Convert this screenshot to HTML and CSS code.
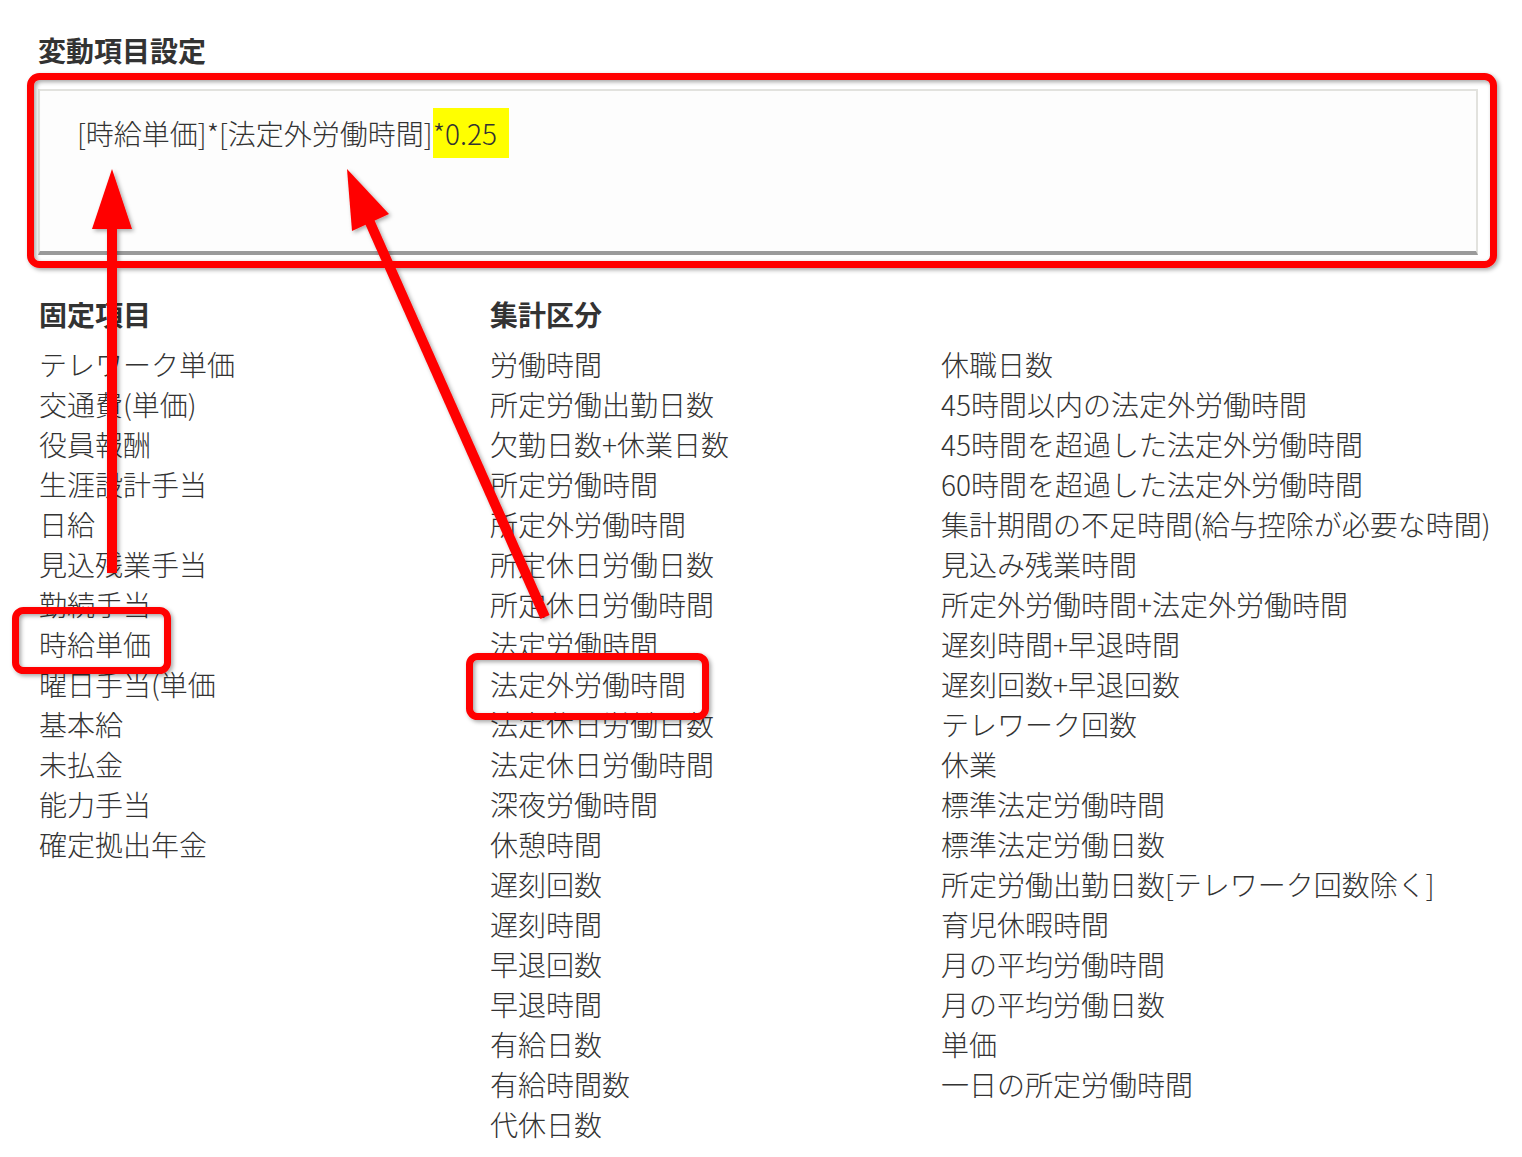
FILE: index.html
```html
<!DOCTYPE html>
<html lang="ja">
<head>
    <meta charset="UTF-8">
    <title>変動項目設定</title>
    <link rel="stylesheet" href="styles.css">
</head>
<body>
    <main class="page">
        <h2 class="section-title">変動項目設定</h2>
        <div class="formula">[時給単価]*[法定外労働時間]<span class="hl">*0.25</span></div>

        <div class="item-groups">
            <section class="group group-fixed">
                <h3 class="group-title">固定項目</h3>
                <ul class="item-list">
                    <li>テレワーク単価</li>
                    <li>交通費(単価)</li>
                    <li>役員報酬</li>
                    <li>生涯設計手当</li>
                    <li>日給</li>
                    <li>見込残業手当</li>
                    <li>勤続手当</li>
                    <li>時給単価</li>
                    <li>曜日手当(単価</li>
                    <li>基本給</li>
                    <li>未払金</li>
                    <li>能力手当</li>
                    <li>確定拠出年金</li>
                </ul>
            </section>

            <section class="group group-totals">
                <h3 class="group-title">集計区分</h3>
                <div class="split">
                    <ul class="item-list">
                        <li>労働時間</li>
                        <li>所定労働出勤日数</li>
                        <li>欠勤日数+休業日数</li>
                        <li>所定労働時間</li>
                        <li>所定外労働時間</li>
                        <li>所定休日労働日数</li>
                        <li>所定休日労働時間</li>
                        <li>法定労働時間</li>
                        <li>法定外労働時間</li>
                        <li>法定休日労働日数</li>
                        <li>法定休日労働時間</li>
                        <li>深夜労働時間</li>
                        <li>休憩時間</li>
                        <li>遅刻回数</li>
                        <li>遅刻時間</li>
                        <li>早退回数</li>
                        <li>早退時間</li>
                        <li>有給日数</li>
                        <li>有給時間数</li>
                        <li>代休日数</li>
                    </ul>
                    <ul class="item-list">
                        <li>休職日数</li>
                        <li>45時間以内の法定外労働時間</li>
                        <li>45時間を超過した法定外労働時間</li>
                        <li>60時間を超過した法定外労働時間</li>
                        <li>集計期間の不足時間(給与控除が必要な時間)</li>
                        <li>見込み残業時間</li>
                        <li>所定外労働時間+法定外労働時間</li>
                        <li>遅刻時間+早退時間</li>
                        <li>遅刻回数+早退回数</li>
                        <li>テレワーク回数</li>
                        <li>休業</li>
                        <li>標準法定労働時間</li>
                        <li>標準法定労働日数</li>
                        <li>所定労働出勤日数[テレワーク回数除く]</li>
                        <li>育児休暇時間</li>
                        <li>月の平均労働時間</li>
                        <li>月の平均労働日数</li>
                        <li>単価</li>
                        <li>一日の所定労働時間</li>
                    </ul>
                </div>
            </section>
        </div>

        <!-- red annotation layer -->
        <svg class="annotations" viewBox="0 0 1522 1157">
            <defs>
                <filter id="shadow" x="-10%" y="-10%" width="120%" height="120%">
                    <feDropShadow dx="2" dy="2" stdDeviation="2" flood-color="#000" flood-opacity="0.35"/>
                </filter>
            </defs>
            <g filter="url(#shadow)">
                <rect x="30.5" y="76.5" width="1463" height="188" rx="9" class="mark-box"/>
                <rect x="15.5" y="610.5" width="152" height="60" rx="8" class="mark-box"/>
                <rect x="469.5" y="656.5" width="236" height="60" rx="8" class="mark-box"/>

                <line x1="112" y1="573" x2="112" y2="225" class="arrow-shaft"/>
                <polygon points="112,169 92,229 132,229" class="arrow-head"/>

                <line x1="545" y1="617" x2="368" y2="218" class="arrow-shaft"/>
                <polygon points="347,169 352,231 389,214" class="arrow-head"/>
            </g>
        </svg>
    </main>
</body>
</html>
```

FILE: styles.css
```css
body {
    margin: 0;
    background: #fff;
    color: #333;
    font-family: "Noto Sans CJK JP", "Noto Sans", sans-serif;
}

.page {
    position: relative;
    width: 1522px;
    min-height: 1157px;
    box-sizing: border-box;
    padding: 30px 0 0 38px;
}

.section-title {
    margin: 0;
    font-size: 28px;
    line-height: 40px;
    font-weight: 700;
}

.formula {
    margin-top: 19px;
    width: 1440px;
    height: 166px;
    box-sizing: border-box;
    padding: 17px 0 0 37px;
    border: 2px solid #e2e2de;
    border-bottom: 4px solid #9a9a9a;
    background: #fdfdfd;
    font-size: 28px;
    line-height: 50px;
    font-weight: 300;
    white-space: nowrap;
}

.hl {
    display: inline-block;
    background: #ffff00;
    padding-right: 12px;
}

.item-groups {
    display: flex;
    margin-top: 39px;
    padding-left: 1px;
}

.group-fixed {
    width: 451px;
}

.split {
    display: flex;
}

.split .item-list {
    width: 451px;
}

.group-title {
    margin: 0 0 10px;
    font-size: 28px;
    line-height: 40px;
    font-weight: 700;
}

.item-list {
    list-style: none;
    margin: 0;
    padding: 0;
    font-size: 28px;
    line-height: 40px;
    font-weight: 300;
    white-space: nowrap;
}

/* annotations */
.annotations {
    position: absolute;
    top: 0;
    left: 0;
    width: 1522px;
    height: 1157px;
    pointer-events: none;
}

.mark-box {
    fill: none;
    stroke: #ff0000;
    stroke-width: 7;
}

.arrow-shaft {
    stroke: #ff0000;
    stroke-width: 10;
}

.arrow-head {
    fill: #ff0000;
}
```
